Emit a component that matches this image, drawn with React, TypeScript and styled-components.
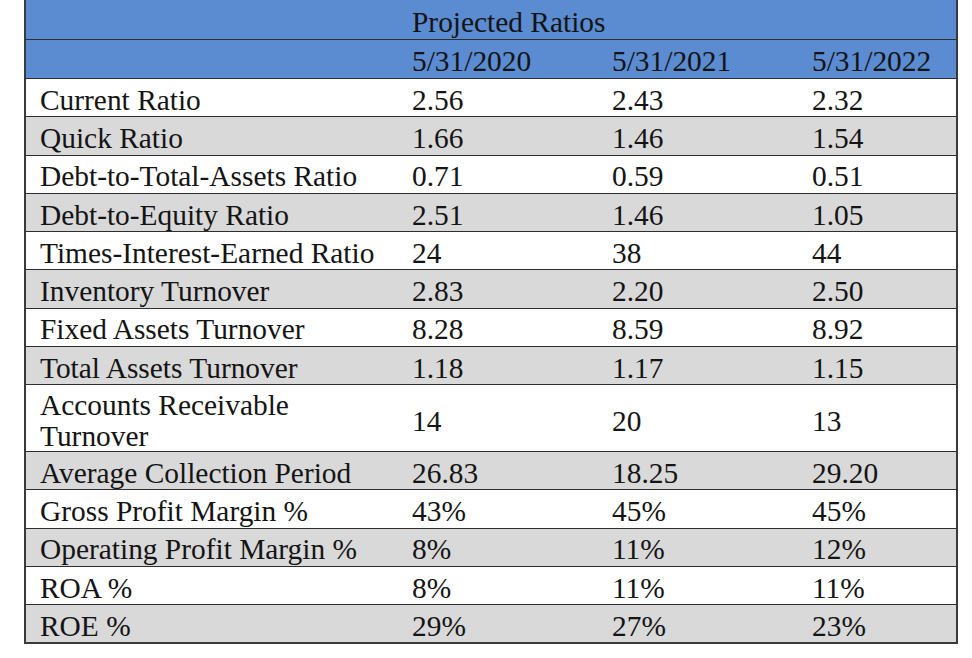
import React from "react";
import styled, { createGlobalStyle } from "styled-components";

const Global = createGlobalStyle`
  html, body { margin: 0; padding: 0; background: #ffffff; }
  body { font-family: "Liberation Serif", "Times New Roman", serif; }
`;

const Page = styled.div`
  width: 972px;
  height: 658px;
  background: #fff;
  padding-left: 24px;
  box-sizing: border-box;
`;

const Table = styled.div`
  width: 934px;
  border-left: 2px solid #3a3a3a;
  border-right: 2px solid #3a3a3a;
  border-bottom: 2px solid #3a3a3a;
  box-sizing: border-box;
  color: #141414;
  font-family: "Liberation Serif", "Times New Roman", serif;
  font-size: 29.4px;
  line-height: 31px;
`;

const Row = styled.div<{ $bg: string; $h: number }>`
  display: grid;
  grid-template-columns: 374px 200px 200px 1fr;
  height: ${(p) => p.$h}px;
  background: ${(p) => p.$bg};
  box-sizing: border-box;
  border-top: 1.6px solid #2e2e2e;
  &:first-child { border-top: none; }
`;

const Cell = styled.div<{ $first?: boolean; $span?: number }>`
  display: flex;
  align-items: center;
  padding: 5px 0 0 ${(p) => (p.$first ? 14 : 12)}px;
  box-sizing: border-box;
  white-space: ${(p) => (p.$first ? "normal" : "nowrap")};
  grid-column: span ${(p) => p.$span ?? 1};
`;

const BLUE = "#5b8bd0";
const GREY = "#d9d9d9";

const rows: [string, string, string, string][] = [
  ["Current Ratio", "2.56", "2.43", "2.32"],
  ["Quick Ratio", "1.66", "1.46", "1.54"],
  ["Debt-to-Total-Assets Ratio", "0.71", "0.59", "0.51"],
  ["Debt-to-Equity Ratio", "2.51", "1.46", "1.05"],
  ["Times-Interest-Earned Ratio", "24", "38", "44"],
  ["Inventory Turnover", "2.83", "2.20", "2.50"],
  ["Fixed Assets Turnover", "8.28", "8.59", "8.92"],
  ["Total Assets Turnover", "1.18", "1.17", "1.15"],
  ["Accounts Receivable Turnover", "14", "20", "13"],
  ["Average Collection Period", "26.83", "18.25", "29.20"],
  ["Gross Profit Margin %", "43%", "45%", "45%"],
  ["Operating Profit Margin %", "8%", "11%", "12%"],
  ["ROA %", "8%", "11%", "11%"],
  ["ROE %", "29%", "27%", "23%"],
];

export default function App() {
  return (
    <Page>
      <Global />
      <Table>
        <Row $bg={BLUE} $h={39}>
          <Cell $first />
          <Cell $span={3}>Projected Ratios</Cell>
        </Row>
        <Row $bg={BLUE} $h={39}>
          <Cell $first />
          <Cell>5/31/2020</Cell>
          <Cell>5/31/2021</Cell>
          <Cell>5/31/2022</Cell>
        </Row>
        {rows.map((r, i) => (
          <Row
            key={r[0]}
            $bg={i % 2 === 0 ? "#ffffff" : GREY}
            $h={r[0] === "Accounts Receivable Turnover" ? 66.6 : 38.3}
          >
            <Cell $first>
              {r[0] === "Accounts Receivable Turnover" ? (
                <span>
                  Accounts Receivable
                  <br />
                  Turnover
                </span>
              ) : (
                r[0]
              )}
            </Cell>
            <Cell>{r[1]}</Cell>
            <Cell>{r[2]}</Cell>
            <Cell>{r[3]}</Cell>
          </Row>
        ))}
      </Table>
    </Page>
  );
}
